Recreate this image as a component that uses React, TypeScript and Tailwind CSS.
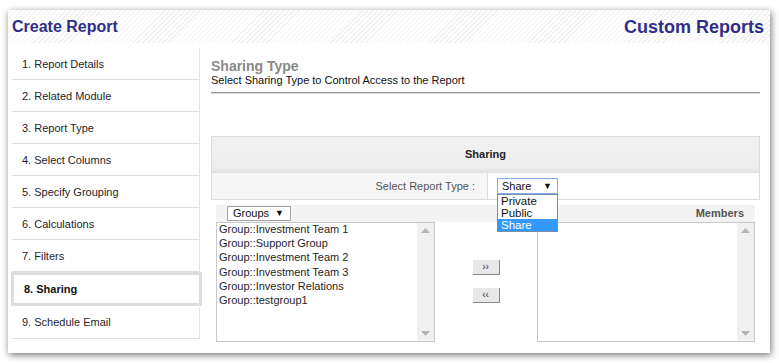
import React from "react";

const steps = [
  "1. Report Details",
  "2. Related Module",
  "3. Report Type",
  "4. Select Columns",
  "5. Specify Grouping",
  "6. Calculations",
  "7. Filters",
  "8. Sharing",
  "9. Schedule Email",
];

const groups = [
  "Group::Investment Team 1",
  "Group::Support Group",
  "Group::Investment Team 2",
  "Group::Investment Team 3",
  "Group::Investor Relations",
  "Group::testgroup1",
];

function ScrollBar() {
  return (
    <div className="w-[17px] h-full bg-[#f0f0f0] flex flex-col justify-between items-center py-[5px]">
      <svg width="9" height="5" viewBox="0 0 9 5"><path d="M0 5 L4.5 0 L9 5 Z" fill="#b5b5b5" /></svg>
      <svg width="9" height="5" viewBox="0 0 9 5"><path d="M0 0 L4.5 5 L9 0 Z" fill="#b5b5b5" /></svg>
    </div>
  );
}

export default function App() {
  return (
    <div className="w-[779px] h-[363px] bg-white overflow-hidden font-['Liberation_Sans',Arial,sans-serif] pt-[10px] pl-[8px]">
      <div className="w-[762px] h-[343px] bg-white shadow-[1px_2px_7px_rgba(0,0,0,0.55)] flex flex-col">
        <div className="h-[33px] flex items-center justify-between pl-[4px] pr-[6px] bg-[repeating-linear-gradient(135deg,#ffffff_0px,#ffffff_2.5px,#f1f1f1_2.5px,#f1f1f1_3.5px)]">
          <div className="text-[16px] font-bold text-[#2f2f88] leading-none">Create Report</div>
          <div className="text-[18px] font-bold text-[#2f2f88] leading-none">Custom Reports</div>
        </div>
        <div className="flex mt-[5px] flex-1">
          <div className="w-[192px] pl-[4px] flex flex-col">
            {steps.map((s, i) =>
              i === 7 ? (
                <div key={s} className="h-[34px] -ml-[1px] mr-[-2px] border-[3px] border-[#dddddd] flex items-center pl-[10px] text-[11px] font-bold text-[#111]">
                  {s}
                </div>
              ) : (
                <div key={s} className={`border-b border-b-[#dcdcdc] border-r border-r-[#e4e4e4] flex items-center pl-[10px] text-[11px] text-[#1e1e2a] ${i === 8 ? "h-[32px] mt-[1px]" : "h-[32px] pt-[1px]"}`}>
                  {s}
                </div>
              )
            )}
          </div>
          <div className="flex-1 pl-[11px] pr-[10px] pt-[10px] flex flex-col">
            <div className="text-[14px] leading-[16px] font-bold text-[#8a8a8a]">Sharing Type</div>
            <div className="text-[11px] leading-[13px] text-[#111]">Select Sharing Type to Control Access to the Report</div>
            <div className="mt-[5px] border-t border-t-[#999] border-b border-b-[#d8d8d8]" />
            <div className="mt-[42px] border border-[#dddddd] relative">
              <div className="h-[35px] flex items-center justify-center bg-[linear-gradient(to_bottom,#f1f1f1_0%,#eeeeee_85%,#e4e4e4_100%)] text-[11px] font-bold text-[#222]">
                Sharing
              </div>
              <div className="h-[27px] flex border-t border-[#e0e0e0]">
                <div className="w-[275px] bg-[#f6f6f6] flex items-center justify-end pr-[12px] text-[11px] text-[#555]">
                  Select Report Type :
                </div>
                <div className="flex-1 bg-white border-l border-[#dddddd] flex items-center pl-[9px] relative">
                  <div className="w-[61px] h-[16px] border border-[#7eaee6] bg-white flex items-center justify-between pl-[4px] pr-[5px] text-[11px] text-[#111]">
                    <span>Share</span>
                    <span className="text-[9px] leading-none">▼</span>
                  </div>
                  <div className="absolute left-[9px] top-[21px] w-[61px] border border-[#7a8ea8] bg-white flex flex-col text-[11.5px] leading-[12px] text-[#111] z-10">
                    <div className="pl-[3px]">Private</div>
                    <div className="pl-[3px]">Public</div>
                    <div className="pl-[3px] bg-[#3399ff] text-white">Share</div>
                  </div>
                </div>
              </div>
            </div>
            <div className="mx-[5px] mt-[5px] flex flex-col">
              <div className="h-[17px] bg-[#f3f3f3] flex items-center justify-between pl-[11px] pr-[11px]">
                <div className="w-[64px] h-[15px] border border-[#a5a5a5] bg-white flex items-center justify-between pl-[5px] pr-[6px] text-[11px] text-[#111]">
                  <span>Groups</span>
                  <span className="text-[9px] leading-none">▼</span>
                </div>
                <div className="text-[11px] font-bold text-[#555]">Members</div>
              </div>
              <div className="flex h-[120px]">
                <div className="w-[219px] border border-[#c8c8c8] flex bg-white">
                  <div className="flex-1 pl-[2px] -mt-[1px] text-[11px] leading-[14.2px] text-[#1e1e2a]">
                    {groups.map((g) => (
                      <div key={g}>{g}</div>
                    ))}
                  </div>
                  <ScrollBar />
                </div>
                <div className="flex-1 flex flex-col items-center pt-[38px] gap-[13px]">
                  <div className="w-[27px] h-[15px] bg-[#e8e8e8] border-r border-b border-[#888] flex items-center justify-center text-[10px] leading-none text-[#335]">››</div>
                  <div className="w-[27px] h-[15px] bg-[#e8e8e8] border-r border-b border-[#888] flex items-center justify-center text-[10px] leading-none text-[#335]">‹‹</div>
                </div>
                <div className="w-[218px] border border-[#c8c8c8] flex bg-white">
                  <div className="flex-1" />
                  <ScrollBar />
                </div>
              </div>
            </div>
          </div>
        </div>
      </div>
    </div>
  );
}
